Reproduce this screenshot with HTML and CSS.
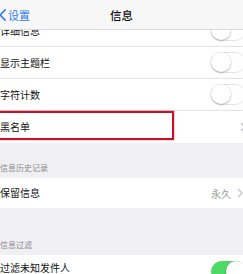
FILE: index.html
```html
<!DOCTYPE html>
<html lang="zh-CN">
<head>
    <meta charset="UTF-8">
    <meta name="viewport" content="width=device-width, initial-scale=1.0">
    <title>信息</title>
    <link rel="stylesheet" href="styles.css">
</head>
<body>

    <div id="screen">
        <header class="navbar">
            <a class="back" href="#">
                <svg class="back-icon" width="7" height="12" viewBox="0 0 7 12"><path d="M6 1 L1.2 6 L6 11" fill="none" stroke="#2f7cf6" stroke-width="1.8" stroke-linecap="round" stroke-linejoin="round"/></svg>
                <span>设置</span>
            </a>
            <h1 class="title">信息</h1>
        </header>

        <div class="group group-first">
            <div class="cell">
                <span class="label">详细信息</span>
                <span class="switch"></span>
            </div>
            <div class="cell">
                <span class="label">显示主题栏</span>
                <span class="switch"></span>
            </div>
            <div class="cell">
                <span class="label">字符计数</span>
                <span class="switch"></span>
            </div>
            <div class="cell cell-marked">
                <span class="label">黑名单</span>
                <svg class="chevron" width="6" height="10" viewBox="0 0 6 10"><path d="M1 1 L5 5 L1 9" fill="none" stroke="#c7c7cc" stroke-width="1.4"/></svg>
            </div>
        </div>

        <div class="group-header">信息历史记录</div>
        <div class="group">
            <div class="cell cell-short">
                <span class="label">保留信息</span>
                <span class="detail">
                    永久
                    <svg class="chevron" width="6" height="10" viewBox="0 0 6 10"><path d="M1 1 L5 5 L1 9" fill="none" stroke="#c7c7cc" stroke-width="1.4"/></svg>
                </span>
            </div>
        </div>

        <div class="group-header group-header-wide">信息过滤</div>
        <div class="group">
            <div class="cell cell-last">
                <span class="label">过滤未知发件人</span>
                <span class="switch switch-on"></span>
            </div>
        </div>
    </div>

</body>
</html>
```

FILE: styles.css
```css
html, body {
    margin: 0;
    padding: 0;
    overflow: hidden;
}

body {
    background-color: #efeff4;
    font-family: "Noto Sans CJK SC", "Noto Sans", sans-serif;
    color: #111;
}

#screen {
    position: relative;
    width: 243px;
    height: 274px;
    overflow: hidden;
}

/* top bar lies over the first row */
.navbar {
    position: absolute;
    top: 0;
    left: 0;
    right: 0;
    height: 29px;
    display: flex;
    align-items: center;
    justify-content: center;
    background-color: #f7f7f8;
    border-bottom: 1px solid #dddde0;
    z-index: 2;
}

.navbar .back {
    position: absolute;
    left: 0;
    top: 0;
    height: 29px;
    display: flex;
    align-items: center;
    gap: 2px;
    color: #2f7cf6;
    font-size: 11px;
    text-decoration: none;
}

.navbar .back-icon {
    margin-left: -1px;
}

.navbar .title {
    margin: 0;
    font-size: 11.5px;
    font-weight: 500;
    color: #111;
}

.group {
    background-color: #fff;
}

.group-first {
    margin-top: 15px;
}

.cell {
    height: 31px;
    display: flex;
    align-items: center;
    justify-content: space-between;
    border-bottom: 1px solid #e3e3e6;
    font-size: 10px;
    overflow: hidden;
}

.group .cell:last-child {
    border-bottom: none;
    height: 32px;
}

.group .cell.cell-short {
    height: 30px;
}

.group .cell.cell-last {
    height: 27px;
    align-items: flex-start;
    padding-top: 6px;
}

.cell .label {
    line-height: 14px;
}

.cell .chevron {
    margin-right: -3px;
}

.cell .detail {
    display: flex;
    align-items: center;
    gap: 6px;
    color: #98989d;
    font-size: 10px;
}

.cell .detail .chevron {
    margin-right: 0;
}

.cell-marked {
    position: relative;
    overflow: visible;
}

.cell-marked::after {
    content: "";
    position: absolute;
    left: -3px;
    top: 0;
    width: 173px;
    height: 25px;
    border: 2px solid #c4122c;
    box-shadow: 0 0 2px rgba(120, 0, 20, 0.5);
}

.switch {
    position: relative;
    flex-shrink: 0;
    width: 33px;
    height: 19px;
    margin-right: -3px;
    border: 1px solid #e4e4e7;
    border-radius: 11px;
    background-color: #fff;
}

.switch::after {
    content: "";
    position: absolute;
    left: -1px;
    top: -1px;
    width: 20px;
    height: 20px;
    border-radius: 50%;
    background-color: #fff;
    box-shadow: 0 1px 2px rgba(0, 0, 0, 0.25), 0 0 0 0.5px rgba(0, 0, 0, 0.08);
}

.switch-on {
    background-color: #4cd964;
    border-color: #4cd964;
}

.switch-on::after {
    left: auto;
    right: -1px;
}

.group-header {
    padding: 19px 0 4px 0;
    line-height: 12px;
    font-size: 8px;
    color: #8a8a8f;
}

.group-header-wide {
    padding-top: 31px;
}
```
